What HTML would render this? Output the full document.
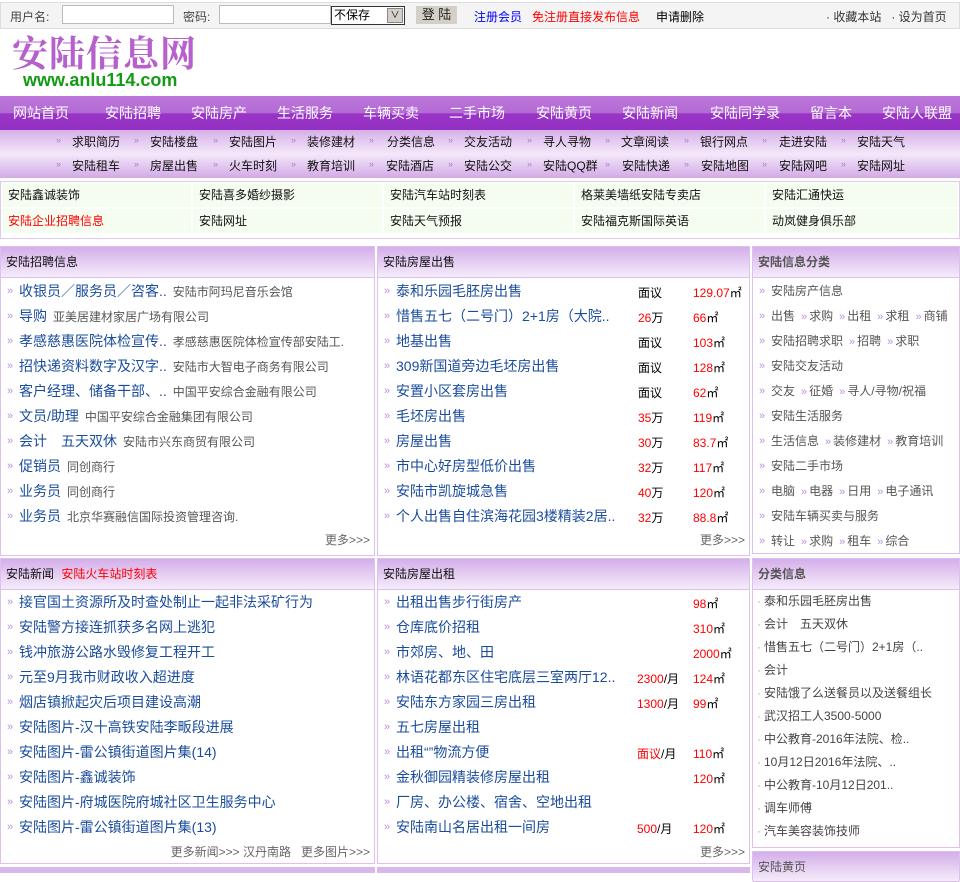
<!DOCTYPE html>
<html><head><meta charset="utf-8">
<style>
*{margin:0;padding:0;box-sizing:border-box}
body{width:960px;height:873px;overflow:hidden;background:#fff;font-family:"Liberation Sans","Noto Sans CJK SC","WenQuanYi Zen Hei",sans-serif;font-size:12px;color:#333;position:relative}
.a{position:absolute;white-space:nowrap}
#top{left:0;top:2px;width:960px;height:27px;background:#f4f4f4;border:1px solid #ddd}
.inp{position:absolute;top:5px;height:19px;border:1px solid #bbb;background:#fff}
#nav{left:0;top:96px;width:960px;height:34px;background:linear-gradient(#bc76da 0,#b36bd4 50%,#9a34c6 52%,#9330c2 100%)}
#nav span{position:absolute;top:7px;color:#fff;font-size:14px}
#sub{left:0;top:130px;width:960px;height:48px;background:linear-gradient(#d6b0e8,#f4e8fa 50%,#d2aae6)}
#sub span{position:absolute;font-size:12px;color:#111}
#sub i{position:absolute;font-style:normal;color:#b07ad0;font-size:9px}
#ql{left:0;top:181px;width:960px;height:58px;border:1px solid #e0c8ee;background:#fff}
.qc{position:absolute;height:24px;background:#f5fdf0;line-height:24px;padding-left:6px;font-size:12px;color:#111}
.pn{position:absolute;border:1px solid #dcc0ee;background:#fff}
.ph{position:absolute;left:0;top:0;right:0;height:31px;background:linear-gradient(#d4aeea,#f5ecfa);border-bottom:1px solid #dcc0ee;line-height:31px;padding-left:5px;font-size:12px;color:#111}
.li{position:absolute;left:0;right:0;height:25px;line-height:24px;font-size:14px;color:#1a4c9c;padding-left:18px;white-space:nowrap;overflow:hidden}
.li:before{content:"»";position:absolute;left:6px;top:0;color:#c090dc;font-size:11px}
.li small{font-size:12px;color:#555;margin-left:6px}
.k{position:absolute;font-size:12px;color:#000}
.r,.k.r,.qc.r{color:#f00}
.rl{position:absolute;left:0;right:0;height:25px;line-height:25px;font-size:12px;color:#555;padding-left:18px;white-space:nowrap}
.rl:before{content:"»";position:absolute;left:6px;color:#c090dc;font-size:11px}
.rl b{font-weight:normal;color:#c090dc;font-size:11px;margin:0 2px 0 6px}
.dl{position:absolute;left:0;right:0;height:23px;line-height:23px;font-size:12px;color:#444;padding-left:11px;white-space:nowrap}
.dl:before{content:"·";position:absolute;left:4px;color:#aaa}
.more{position:absolute;right:4px;font-size:12px;color:#666}
</style></head><body>

<div class="a" id="top"></div>
<div class="a" style="left:10px;top:8px;color:#444">用户名:</div>
<div class="inp" style="left:62px;width:112px"></div>
<div class="a" style="left:183px;top:8px;color:#444">密码:</div>
<div class="inp" style="left:219px;width:112px"></div>
<div class="a" style="left:331px;top:6px;width:74px;height:19px;border:1px solid #333;background:#fff;font-size:12px;line-height:17px;padding-left:2px;color:#000">不保存<span style="position:absolute;right:1px;top:1px;width:16px;height:15px;background:#d4d0c8;border:1px solid #888;font-size:9px;text-align:center;line-height:13px">∨</span></div>
<div class="a" style="left:416px;top:6px;width:41px;height:18px;background:#d4d0c8;text-align:center;line-height:18px;color:#222;font-size:13px">登 陆</div>
<div class="a" style="left:474px;top:8px;color:#00f">注册会员</div>
<div class="a" style="left:532px;top:8px;color:#f00">免注册直接发布信息</div>
<div class="a" style="left:656px;top:8px;color:#000">申请删除</div>
<div class="a" style="left:826px;top:8px;color:#333">· 收藏本站 &nbsp; · 设为首页</div>

<div class="a" style="left:12px;top:31px;font-size:36px;font-weight:bold;color:#b560cc;font-family:'Noto Serif CJK SC',serif;letter-spacing:1px;line-height:42px">安陆信息网</div>
<div class="a" style="left:23px;top:70px;font-size:18px;font-weight:bold;color:#149a14">www.anlu114.com</div>

<div class="a" id="nav">
<span style="left:13px">网站首页</span><span style="left:105px">安陆招聘</span><span style="left:191px">安陆房产</span><span style="left:277px">生活服务</span><span style="left:363px">车辆买卖</span><span style="left:449px">二手市场</span><span style="left:536px">安陆黄页</span><span style="left:622px">安陆新闻</span><span style="left:710px">安陆同学录</span><span style="left:810px">留言本</span><span style="left:882px">安陆人联盟</span>
</div>

<div class="a" id="sub">
<i style="left:56px;top:5px">»</i><span style="left:72px;top:3px">求职简历</span><i style="left:134px;top:5px">»</i><span style="left:150px;top:3px">安陆楼盘</span><i style="left:213px;top:5px">»</i><span style="left:229px;top:3px">安陆图片</span><i style="left:291px;top:5px">»</i><span style="left:307px;top:3px">装修建材</span><i style="left:369px;top:5px">»</i><span style="left:387px;top:3px">分类信息</span><i style="left:448px;top:5px">»</i><span style="left:464px;top:3px">交友活动</span><i style="left:527px;top:5px">»</i><span style="left:543px;top:3px">寻人寻物</span><i style="left:605px;top:5px">»</i><span style="left:621px;top:3px">文章阅读</span><i style="left:684px;top:5px">»</i><span style="left:700px;top:3px">银行网点</span><i style="left:762px;top:5px">»</i><span style="left:779px;top:3px">走进安陆</span><i style="left:841px;top:5px">»</i><span style="left:857px;top:3px">安陆天气</span>
<i style="left:56px;top:29px">»</i><span style="left:72px;top:27px">安陆租车</span><i style="left:134px;top:29px">»</i><span style="left:150px;top:27px">房屋出售</span><i style="left:213px;top:29px">»</i><span style="left:229px;top:27px">火车时刻</span><i style="left:291px;top:29px">»</i><span style="left:307px;top:27px">教育培训</span><i style="left:369px;top:29px">»</i><span style="left:386px;top:27px">安陆酒店</span><i style="left:448px;top:29px">»</i><span style="left:464px;top:27px">安陆公交</span><i style="left:527px;top:29px">»</i><span style="left:543px;top:27px">安陆QQ群</span><i style="left:605px;top:29px">»</i><span style="left:622px;top:27px">安陆快递</span><i style="left:684px;top:29px">»</i><span style="left:701px;top:27px">安陆地图</span><i style="left:762px;top:29px">»</i><span style="left:779px;top:27px">安陆网吧</span><i style="left:841px;top:29px">»</i><span style="left:857px;top:27px">安陆网址</span>
</div>

<div class="a" id="ql">
<div class="qc" style="left:1px;top:1px;width:189px">安陆鑫诚装饰</div>
<div class="qc" style="left:192px;top:1px;width:189px">安陆喜多婚纱摄影</div>
<div class="qc" style="left:383px;top:1px;width:189px">安陆汽车站时刻表</div>
<div class="qc" style="left:574px;top:1px;width:189px">格莱美墙纸安陆专卖店</div>
<div class="qc" style="left:765px;top:1px;width:192px">安陆汇通快运</div>
<div class="qc r" style="left:1px;top:27px;width:189px">安陆企业招聘信息</div>
<div class="qc" style="left:192px;top:27px;width:189px">安陆网址</div>
<div class="qc" style="left:383px;top:27px;width:189px">安陆天气预报</div>
<div class="qc" style="left:574px;top:27px;width:189px">安陆福克斯国际英语</div>
<div class="qc" style="left:765px;top:27px;width:192px">动岚健身俱乐部</div>
</div>

<!-- left row1 -->
<div class="pn" style="left:0;top:246px;width:375px;height:310px">
<div class="ph">安陆招聘信息</div>
<div class="li" style="top:32px">收银员／服务员／咨客..<small>安陆市阿玛尼音乐会馆</small></div>
<div class="li" style="top:57px">导购<small>亚美居建材家居广场有限公司</small></div>
<div class="li" style="top:82px">孝感慈惠医院体检宣传..<small>孝感慈惠医院体检宣传部安陆工.</small></div>
<div class="li" style="top:107px">招快递资料数字及汉字..<small>安陆市大智电子商务有限公司</small></div>
<div class="li" style="top:132px">客户经理、储备干部、..<small>中国平安综合金融有限公司</small></div>
<div class="li" style="top:157px">文员/助理<small>中国平安综合金融集团有限公司</small></div>
<div class="li" style="top:182px">会计　五天双休<small>安陆市兴东商贸有限公司</small></div>
<div class="li" style="top:207px">促销员<small>同创商行</small></div>
<div class="li" style="top:232px">业务员<small>同创商行</small></div>
<div class="li" style="top:257px">业务员<small>北京华赛融信国际投资管理咨询.</small></div>
<div class="more" style="top:284px">更多&gt;&gt;&gt;</div>
</div>

<!-- mid row1 -->
<div class="pn" style="left:377px;top:246px;width:373px;height:310px">
<div class="ph">安陆房屋出售</div>
<div class="li" style="top:32px">泰和乐园毛胚房出售</div>
<div class="li" style="top:57px;width:245px">惜售五七（二号门）2+1房（大院..</div>
<div class="li" style="top:82px">地基出售</div>
<div class="li" style="top:107px">309新国道旁边毛坯房出售</div>
<div class="li" style="top:132px">安置小区套房出售</div>
<div class="li" style="top:157px">毛坯房出售</div>
<div class="li" style="top:182px">房屋出售</div>
<div class="li" style="top:207px">市中心好房型低价出售</div>
<div class="li" style="top:232px">安陆市凯旋城急售</div>
<div class="li" style="top:257px;width:250px">个人出售自住滨海花园3楼精装2居..</div>
<div class="k" style="left:260px;top:37px">面议</div><div class="k r" style="left:315px;top:37px">129.07<span style="color:#000">㎡</span></div>
<div class="k" style="left:260px;top:62px"><span class="r">26</span>万</div><div class="k r" style="left:315px;top:62px">66<span style="color:#000">㎡</span></div>
<div class="k" style="left:260px;top:87px">面议</div><div class="k r" style="left:315px;top:87px">103<span style="color:#000">㎡</span></div>
<div class="k" style="left:260px;top:112px">面议</div><div class="k r" style="left:315px;top:112px">128<span style="color:#000">㎡</span></div>
<div class="k" style="left:260px;top:137px">面议</div><div class="k r" style="left:315px;top:137px">62<span style="color:#000">㎡</span></div>
<div class="k" style="left:260px;top:162px"><span class="r">35</span>万</div><div class="k r" style="left:315px;top:162px">119<span style="color:#000">㎡</span></div>
<div class="k" style="left:260px;top:187px"><span class="r">30</span>万</div><div class="k r" style="left:315px;top:187px">83.7<span style="color:#000">㎡</span></div>
<div class="k" style="left:260px;top:212px"><span class="r">32</span>万</div><div class="k r" style="left:315px;top:212px">117<span style="color:#000">㎡</span></div>
<div class="k" style="left:260px;top:237px"><span class="r">40</span>万</div><div class="k r" style="left:315px;top:237px">120<span style="color:#000">㎡</span></div>
<div class="k" style="left:260px;top:262px"><span class="r">32</span>万</div><div class="k r" style="left:315px;top:262px">88.8<span style="color:#000">㎡</span></div>
<div class="more" style="top:284px">更多&gt;&gt;&gt;</div>
</div>

<!-- right row1 -->
<div class="pn" style="left:752px;top:246px;width:208px;height:308px">
<div class="ph" style="font-weight:bold;color:#555">安陆信息分类</div>
<div class="rl" style="top:32px">安陆房产信息</div>
<div class="rl" style="top:57px">出售<b>»</b>求购<b>»</b>出租<b>»</b>求租<b>»</b>商铺</div>
<div class="rl" style="top:82px">安陆招聘求职<b>»</b>招聘<b>»</b>求职</div>
<div class="rl" style="top:107px">安陆交友活动</div>
<div class="rl" style="top:132px">交友<b>»</b>征婚<b>»</b>寻人/寻物/祝福</div>
<div class="rl" style="top:157px">安陆生活服务</div>
<div class="rl" style="top:182px">生活信息<b>»</b>装修建材<b>»</b>教育培训</div>
<div class="rl" style="top:207px">安陆二手市场</div>
<div class="rl" style="top:232px">电脑<b>»</b>电器<b>»</b>日用<b>»</b>电子通讯</div>
<div class="rl" style="top:257px">安陆车辆买卖与服务</div>
<div class="rl" style="top:282px">转让<b>»</b>求购<b>»</b>租车<b>»</b>综合</div>
</div>

<!-- left row2 -->
<div class="pn" style="left:0;top:558px;width:375px;height:306px">
<div class="ph">安陆新闻 <span class="r" style="margin-left:4px">安陆火车站时刻表</span></div>
<div class="li" style="top:31px">接官国土资源所及时查处制止一起非法采矿行为</div>
<div class="li" style="top:56px">安陆警方接连抓获多名网上逃犯</div>
<div class="li" style="top:81px">钱冲旅游公路水毁修复工程开工</div>
<div class="li" style="top:106px">元至9月我市财政收入超进度</div>
<div class="li" style="top:131px">烟店镇掀起灾后项目建设高潮</div>
<div class="li" style="top:156px">安陆图片-汉十高铁安陆李畈段进展</div>
<div class="li" style="top:181px">安陆图片-雷公镇街道图片集(14)</div>
<div class="li" style="top:206px">安陆图片-鑫诚装饰</div>
<div class="li" style="top:231px">安陆图片-府城医院府城社区卫生服务中心</div>
<div class="li" style="top:256px">安陆图片-雷公镇街道图片集(13)</div>
<div class="more" style="top:284px">更多新闻&gt;&gt;&gt; 汉丹南路 &nbsp; 更多图片&gt;&gt;&gt;</div>
</div>

<!-- mid row2 -->
<div class="pn" style="left:377px;top:558px;width:373px;height:306px">
<div class="ph">安陆房屋出租</div>
<div class="li" style="top:31px">出租出售步行街房产</div>
<div class="li" style="top:56px">仓库底价招租</div>
<div class="li" style="top:81px">市郊房、地、田</div>
<div class="li" style="top:106px;width:245px">林语花都东区住宅底层三室两厅12..</div>
<div class="li" style="top:131px">安陆东方家园三房出租</div>
<div class="li" style="top:156px">五七房屋出租</div>
<div class="li" style="top:181px">出租“”物流方便</div>
<div class="li" style="top:206px">金秋御园精装修房屋出租</div>
<div class="li" style="top:231px">厂房、办公楼、宿舍、空地出租</div>
<div class="li" style="top:256px">安陆南山名居出租一间房</div>
<div class="k r" style="left:315px;top:36px">98<span style="color:#000">㎡</span></div>
<div class="k r" style="left:315px;top:61px">310<span style="color:#000">㎡</span></div>
<div class="k r" style="left:315px;top:86px">2000<span style="color:#000">㎡</span></div>
<div class="k" style="left:259px;top:111px"><span class="r">2300</span>/月</div><div class="k r" style="left:315px;top:111px">124<span style="color:#000">㎡</span></div>
<div class="k" style="left:259px;top:136px"><span class="r">1300</span>/月</div><div class="k r" style="left:315px;top:136px">99<span style="color:#000">㎡</span></div>
<div class="k" style="left:259px;top:186px"><span class="r">面议</span>/月</div><div class="k r" style="left:315px;top:186px">110<span style="color:#000">㎡</span></div>
<div class="k r" style="left:315px;top:211px">120<span style="color:#000">㎡</span></div>
<div class="k" style="left:259px;top:261px"><span class="r">500</span>/月</div><div class="k r" style="left:315px;top:261px">120<span style="color:#000">㎡</span></div>
<div class="more" style="top:284px">更多&gt;&gt;&gt;</div>
</div>

<!-- right row2 -->
<div class="pn" style="left:752px;top:558px;width:208px;height:290px">
<div class="ph" style="font-weight:bold;color:#555">分类信息</div>
<div class="dl" style="top:31px">泰和乐园毛胚房出售</div>
<div class="dl" style="top:54px">会计　五天双休</div>
<div class="dl" style="top:77px">惜售五七（二号门）2+1房（..</div>
<div class="dl" style="top:100px">会计</div>
<div class="dl" style="top:123px">安陆饿了么送餐员以及送餐组长</div>
<div class="dl" style="top:146px">武汉招工人3500-5000</div>
<div class="dl" style="top:169px">中公教育-2016年法院、检..</div>
<div class="dl" style="top:192px">10月12日2016年法院、..</div>
<div class="dl" style="top:215px">中公教育-10月12日201..</div>
<div class="dl" style="top:238px">调车师傅</div>
<div class="dl" style="top:261px">汽车美容装饰技师</div>
</div>
<div class="pn" style="left:752px;top:851px;width:208px;height:30px">
<div class="ph" style="height:30px;line-height:30px;color:#555">安陆黄页</div>
</div>
<div class="a" style="left:0;top:867px;width:375px;height:6px;background:#d8b8ea"></div>
<div class="a" style="left:377px;top:867px;width:373px;height:6px;background:#d8b8ea"></div>
</body></html>
